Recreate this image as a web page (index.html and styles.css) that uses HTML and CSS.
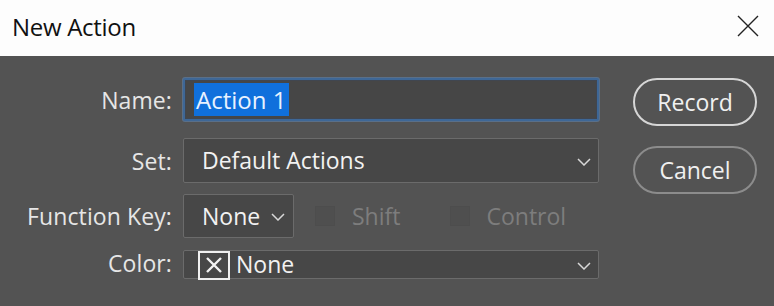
FILE: index.html
```html
<!DOCTYPE html>
<html>
<head>
<meta charset="utf-8">
<link rel="stylesheet" href="styles.css">
</head>
<body>
<div class="dialog">
  <div class="titlebar">
    <span class="title">New Action</span>
    <svg class="close" width="22" height="22" viewBox="0 0 22 22"><path d="M1 1 L21 21 M21 1 L1 21" stroke="#222" stroke-width="1.4" fill="none"/></svg>
  </div>
  <div class="content">
    <div class="form">
      <label class="lbl r1">Name:</label>
      <div class="field input r1"><span class="sel">Action 1</span></div>

      <label class="lbl r2">Set:</label>
      <div class="field select r2"><span class="val">Default Actions</span>
        <svg class="chev" width="14" height="8" viewBox="0 0 14 8"><polyline points="1,1 7,7 13,1" stroke="#d8d8d8" stroke-width="1.5" fill="none"/></svg>
      </div>

      <label class="lbl r3">Function Key:</label>
      <div class="keyrow r3">
        <div class="field select fkey"><span class="val">None</span>
          <svg class="chev" width="14" height="8" viewBox="0 0 14 8"><polyline points="1,1 7,7 13,1" stroke="#d8d8d8" stroke-width="1.5" fill="none"/></svg>
        </div>
        <span class="cb"></span><span class="cbl">Shift</span>
        <span class="cb cb2"></span><span class="cbl">Control</span>
      </div>

      <label class="lbl r4">Color:</label>
      <div class="field select color r4">
        <span class="swatch"><svg width="18" height="18" viewBox="0 0 18 18"><path d="M2 2 L16 16 M16 2 L2 16" stroke="#f2f2f2" stroke-width="2.4" fill="none"/></svg></span>
        <span class="val cval">None</span>
        <svg class="chev" width="14" height="8" viewBox="0 0 14 8"><polyline points="1,1 7,7 13,1" stroke="#d8d8d8" stroke-width="1.5" fill="none"/></svg>
      </div>
    </div>
    <div class="buttons">
      <button class="btn primary">Record</button>
      <button class="btn">Cancel</button>
    </div>
  </div>
</div>
</body>
</html>
```

FILE: styles.css
```css
* { box-sizing: border-box; }
html, body { margin: 0; padding: 0; }
body {
  width: 774px;
  height: 306px;
  overflow: hidden;
  background: #535353;
  font-family: "Open Sans", "Noto Sans", sans-serif;
}
.dialog { width: 774px; height: 306px; display: flex; flex-direction: column; }
.titlebar {
  height: 56px;
  background: #fdfdfd;
  display: flex;
  align-items: center;
  justify-content: space-between;
  padding: 0 15px 0 12px;
}
.title {
  font-size: 24px;
  color: #111;
  letter-spacing: -0.3px;
  margin-top: -3px;
}
.close { margin-top: -4px; }
.content {
  flex: 1;
  display: flex;
  background: #535353;
  padding-top: 22px;
}
.form {
  display: grid;
  grid-template-columns: 172px 416px;
  grid-template-rows: 43px 62px 56px 40px;
  column-gap: 11px;
  align-items: end;
}
.lbl {
  text-align: right;
  color: #e6e6e6;
  font-size: 23px;
  letter-spacing: 0.1px;
}
.lbl.r1 { align-self: center; }
.lbl.r2 { padding-bottom: 6px; }
.lbl.r3 { padding-bottom: 7px; }
.lbl.r4 { padding-bottom: 0px; }
.field {
  color: #f2f2f2;
  font-size: 23px;
  display: flex;
  align-items: center;
  border-radius: 2px;
}
.input {
  height: 43px;
  background: #464646;
  border: 2px solid #3e6796;
  box-shadow: 0 0 0 1px #5a6f88, inset 0 0 0 1px #404650;
  padding-left: 9px;
  align-self: center;
}
.sel {
  background: #1070dc;
  color: #e9f2ff;
  height: 33px;
  line-height: 33px;
  padding: 0 3px 0 2px;
  font-size: 24px;
}
.select {
  background: #474747;
  border: 1px solid #6b6b6b;
  position: relative;
  padding-left: 18px;
}
.r2.select { height: 45px; }
.val { line-height: 1; }
.chev { position: absolute; right: 7px; top: 50%; margin-top: -3px; }
.keyrow {
  display: flex;
  align-items: center;
  height: 44px;
  margin-bottom: 1px;
}
.fkey { height: 44px; width: 111px; }
.fkey .chev { right: 8px; }
.cb {
  width: 20px;
  height: 20px;
  border: 1px solid #4d4d4d;
  background: #4f4f4f;
  margin-left: 21px;
  margin-right: 17px;
}
.cb2 { margin-left: 50px; margin-right: 16px; }
.cbl {
  color: #7d7d7d;
  font-size: 23px;
}
.color { height: 29px; padding-left: 14px; }
.swatch {
  width: 32px;
  height: 29px;
  border: 2px solid #f0f0f0;
  display: flex;
  align-items: center;
  justify-content: center;
  margin-right: 6px;
  margin-top: 1px;
}
.buttons {
  display: flex;
  flex-direction: column;
  gap: 20px;
  margin-left: 34px;
}
.btn {
  width: 124px;
  height: 48px;
  border-radius: 24px;
  background: transparent;
  border: 2px solid #8c8c8c;
  color: #f0f0f0;
  font-family: "Open Sans", "Noto Sans", sans-serif;
  font-size: 23px;
  padding: 0;
}
.btn.primary { border-color: #d6d6d6; }
```
